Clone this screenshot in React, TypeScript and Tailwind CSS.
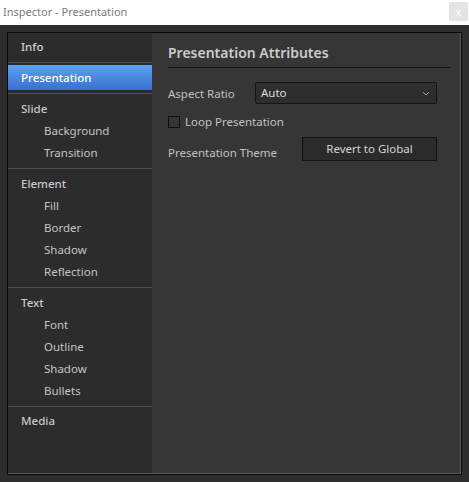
import React from 'react';

type NavSection = {
  title: string;
  items: string[];
};

const sections: NavSection[] = [
  { title: 'Slide', items: ['Background', 'Transition'] },
  { title: 'Element', items: ['Fill', 'Border', 'Shadow', 'Reflection'] },
  { title: 'Text', items: ['Font', 'Outline', 'Shadow', 'Bullets'] },
];

function Separator() {
  return <div className="h-px bg-[#4d4d4d]" />;
}

function Sidebar() {
  return (
    <div className="w-[144px] bg-[#2c2c2c] flex flex-col">
      <div className="pt-[3px] pb-[4px]">
        <div className="h-[22px] flex items-center pl-[13px] font-medium text-[#cfcfcf]">Info</div>
      </div>
      <Separator />
      <div className="pt-[2px] pb-[3px]">
        <div className="h-[25px] flex items-center pl-[13px] font-medium text-white bg-gradient-to-b from-[#5da2f2] to-[#3a6fd0]">
          Presentation
        </div>
      </div>
      <Separator />
      {sections.map((section) => (
        <React.Fragment key={section.title}>
          <div className="pt-[4px] pb-[4px]">
            <div className="h-[22px] flex items-center pl-[13px] font-medium text-[#c8c8c8]">{section.title}</div>
            {section.items.map((item) => (
              <div key={item} className="h-[22px] flex items-center pl-[36px] text-[#c4c4c4]">
                {item}
              </div>
            ))}
          </div>
          <Separator />
        </React.Fragment>
      ))}
      <div className="pt-[3px]">
        <div className="h-[22px] flex items-center pl-[13px] font-medium text-[#c8c8c8]">Media</div>
      </div>
    </div>
  );
}

function AttributesPanel() {
  return (
    <div className="flex-1 bg-[#363636] pl-[16px] pr-[9px] pt-[9px] text-[#c2c2c2]">
      <div className="border-b border-[#141414] pb-[5px]">
        <div className="h-[20px] flex items-center text-[14px] font-semibold text-[#cbcbcb]">
          Presentation Attributes
        </div>
      </div>

      <div className="mt-[14px] flex items-center h-[22px]">
        <div className="w-[87px] pt-[2px]">Aspect Ratio</div>
        <div className="w-[182px] h-[22px] rounded-[2px] border border-[#151515] bg-[#2e2e2e] flex items-center justify-between pl-[5px] pr-[6px] text-[#dcdcdc]">
          <span>Auto</span>
          <svg width="8" height="5" viewBox="0 0 8 5" fill="none">
            <path d="M1 1l3 3 3-3" stroke="#a0a0a0" strokeWidth="1" />
          </svg>
        </div>
      </div>

      <div className="mt-[7px] h-[22px] flex items-center gap-[5px]">
        <div className="w-[12px] h-[12px] border border-[#0e0e0e] bg-[#363636]" />
        <span>Loop Presentation</span>
      </div>

      <div className="mt-[4px] flex items-end">
        <div className="w-[134px] pb-[0px]">Presentation Theme</div>
        <div className="w-[135px] h-[24px] border border-[#121212] bg-[#2b2b2b] flex items-center justify-center text-[#d4d4d4]">
          Revert to Global
        </div>
      </div>
    </div>
  );
}

export default function App() {
  return (
    <div
      className="w-[469px] h-[482px] flex flex-col text-[11.5px] overflow-hidden"
      style={{ fontFamily: '"Noto Sans", "Open Sans", sans-serif' }}
    >
      <div className="h-[25px] bg-white flex items-center justify-between pl-[3px]">
        <span className="text-[11px] text-[#7a7a7a]">Inspector - Presentation</span>
        <div className="w-[19px] h-[19px] mr-[1px] mb-[2px] bg-[#e4e4e4] flex items-center justify-center text-[10px] text-white leading-none">
          x
        </div>
      </div>

      <div className="flex-1 bg-[#2d2d2d] p-[7px]">
        <div className="h-full border border-[#080808] flex">
          <div className="flex-1 flex border-r border-b border-[#5a5a5a]">
            <Sidebar />
            <AttributesPanel />
          </div>
        </div>
      </div>
    </div>
  );
}
